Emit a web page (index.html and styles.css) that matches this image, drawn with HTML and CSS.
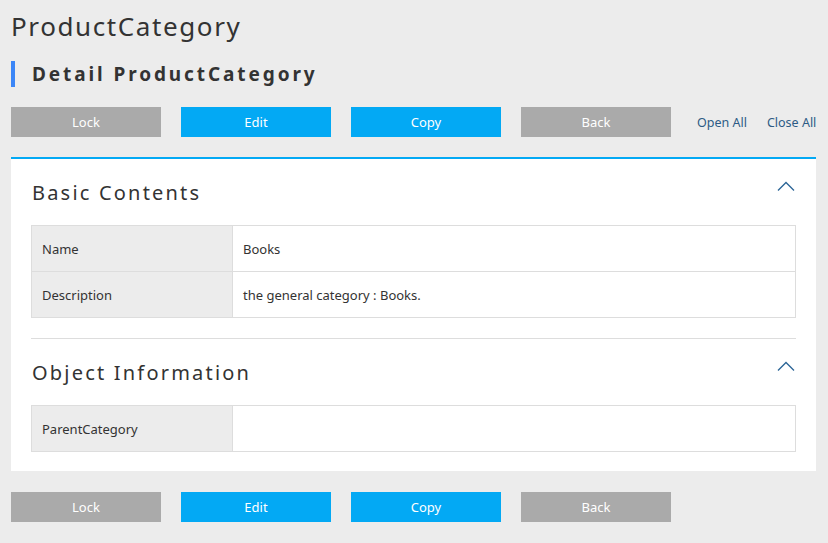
FILE: index.html
```html
<!DOCTYPE html>
<html>
<head>
<meta charset="utf-8">
<link rel="stylesheet" href="styles.css">
</head>
<body>
<div class="page">
  <h1 class="title">ProductCategory</h1>
  <h2 class="subtitle">Detail ProductCategory</h2>
  <div class="actions">
    <button class="btn btn-gray">Lock</button>
    <button class="btn btn-blue">Edit</button>
    <button class="btn btn-blue">Copy</button>
    <button class="btn btn-gray">Back</button>
    <a class="link link-open">Open All</a>
    <a class="link link-close">Close All</a>
  </div>
  <div class="panel">
    <section class="section section-divided">
      <div class="section-head">
        <h3 class="section-title">Basic Contents</h3>
        <svg class="chevron" width="18" height="10" viewBox="0 0 18 10"><path d="M1 9.5 L9 1.5 L17 9.5" fill="none" stroke="#2a6496" stroke-width="1.3"/></svg>
      </div>
      <table class="grid">
        <tr><th>Name</th><td>Books</td></tr>
        <tr><th>Description</th><td>the general category : Books.</td></tr>
      </table>
    </section>
    <section class="section">
      <div class="section-head">
        <h3 class="section-title">Object Information</h3>
        <svg class="chevron" width="18" height="10" viewBox="0 0 18 10"><path d="M1 9.5 L9 1.5 L17 9.5" fill="none" stroke="#2a6496" stroke-width="1.3"/></svg>
      </div>
      <table class="grid">
        <tr><th>ParentCategory</th><td></td></tr>
      </table>
    </section>
  </div>
  <div class="actions actions-bottom">
    <button class="btn btn-gray">Lock</button>
    <button class="btn btn-blue">Edit</button>
    <button class="btn btn-blue">Copy</button>
    <button class="btn btn-gray">Back</button>
  </div>
</div>
</body>
</html>
```
FILE: styles.css
```css
html, body {
  margin: 0;
  padding: 0;
  background: #ececec;
}
body {
  font-family: "Noto Sans", "Open Sans", sans-serif;
  color: #333;
}
.page {
  padding: 0 12px 0 11px;
}
.title {
  margin: 9px 0 0;
  font-size: 26px;
  line-height: 34px;
  font-weight: 400;
  letter-spacing: 1.6px;
  color: #333;
}
.subtitle {
  margin: 18px 0 0;
  height: 26px;
  line-height: 26px;
  border-left: 4px solid #3b86f7;
  padding-left: 17px;
  font-size: 19px;
  font-weight: 700;
  letter-spacing: 2.9px;
  color: #333;
}
.actions {
  margin-top: 20px;
  display: flex;
  align-items: center;
  gap: 20px;
}
.actions-bottom {
  margin-top: 21px;
}
.btn {
  flex: 0 0 150px;
  width: 150px;
  height: 30px;
  border: 0;
  padding: 0;
  font-family: inherit;
  font-size: 13px;
  color: #fff;
}
.btn-gray { background: #aaaaaa; }
.btn-blue { background: #03a9f4; }
.link {
  font-size: 12.5px;
  color: #2c5b85;
  white-space: nowrap;
}
.link-open { margin-left: 6px; }
.panel {
  margin-top: 20px;
  background: #fff;
  border-top: 2px solid #03a9f4;
  padding: 0 20px 19px;
}
.section-divided {
  padding-bottom: 20px;
  border-bottom: 1px solid #dddddd;
}
.section-head {
  height: 66px;
  display: flex;
  justify-content: space-between;
  align-items: center;
}
.section-title {
  margin: 0 0 0 1px;
  font-size: 20px;
  font-weight: 400;
  letter-spacing: 2.2px;
  color: #333;
}
.chevron {
  align-self: flex-start;
  margin-top: 22px;
  margin-right: 1px;
}
.grid {
  width: 100%;
  border-collapse: collapse;
  font-size: 13px;
}
.grid th, .grid td {
  height: 45px;
  border: 1px solid #dddddd;
  padding: 0 10px;
  text-align: left;
  font-weight: 400;
  color: #333;
}
.grid th {
  width: 180px;
  background: #ececec;
}
```
